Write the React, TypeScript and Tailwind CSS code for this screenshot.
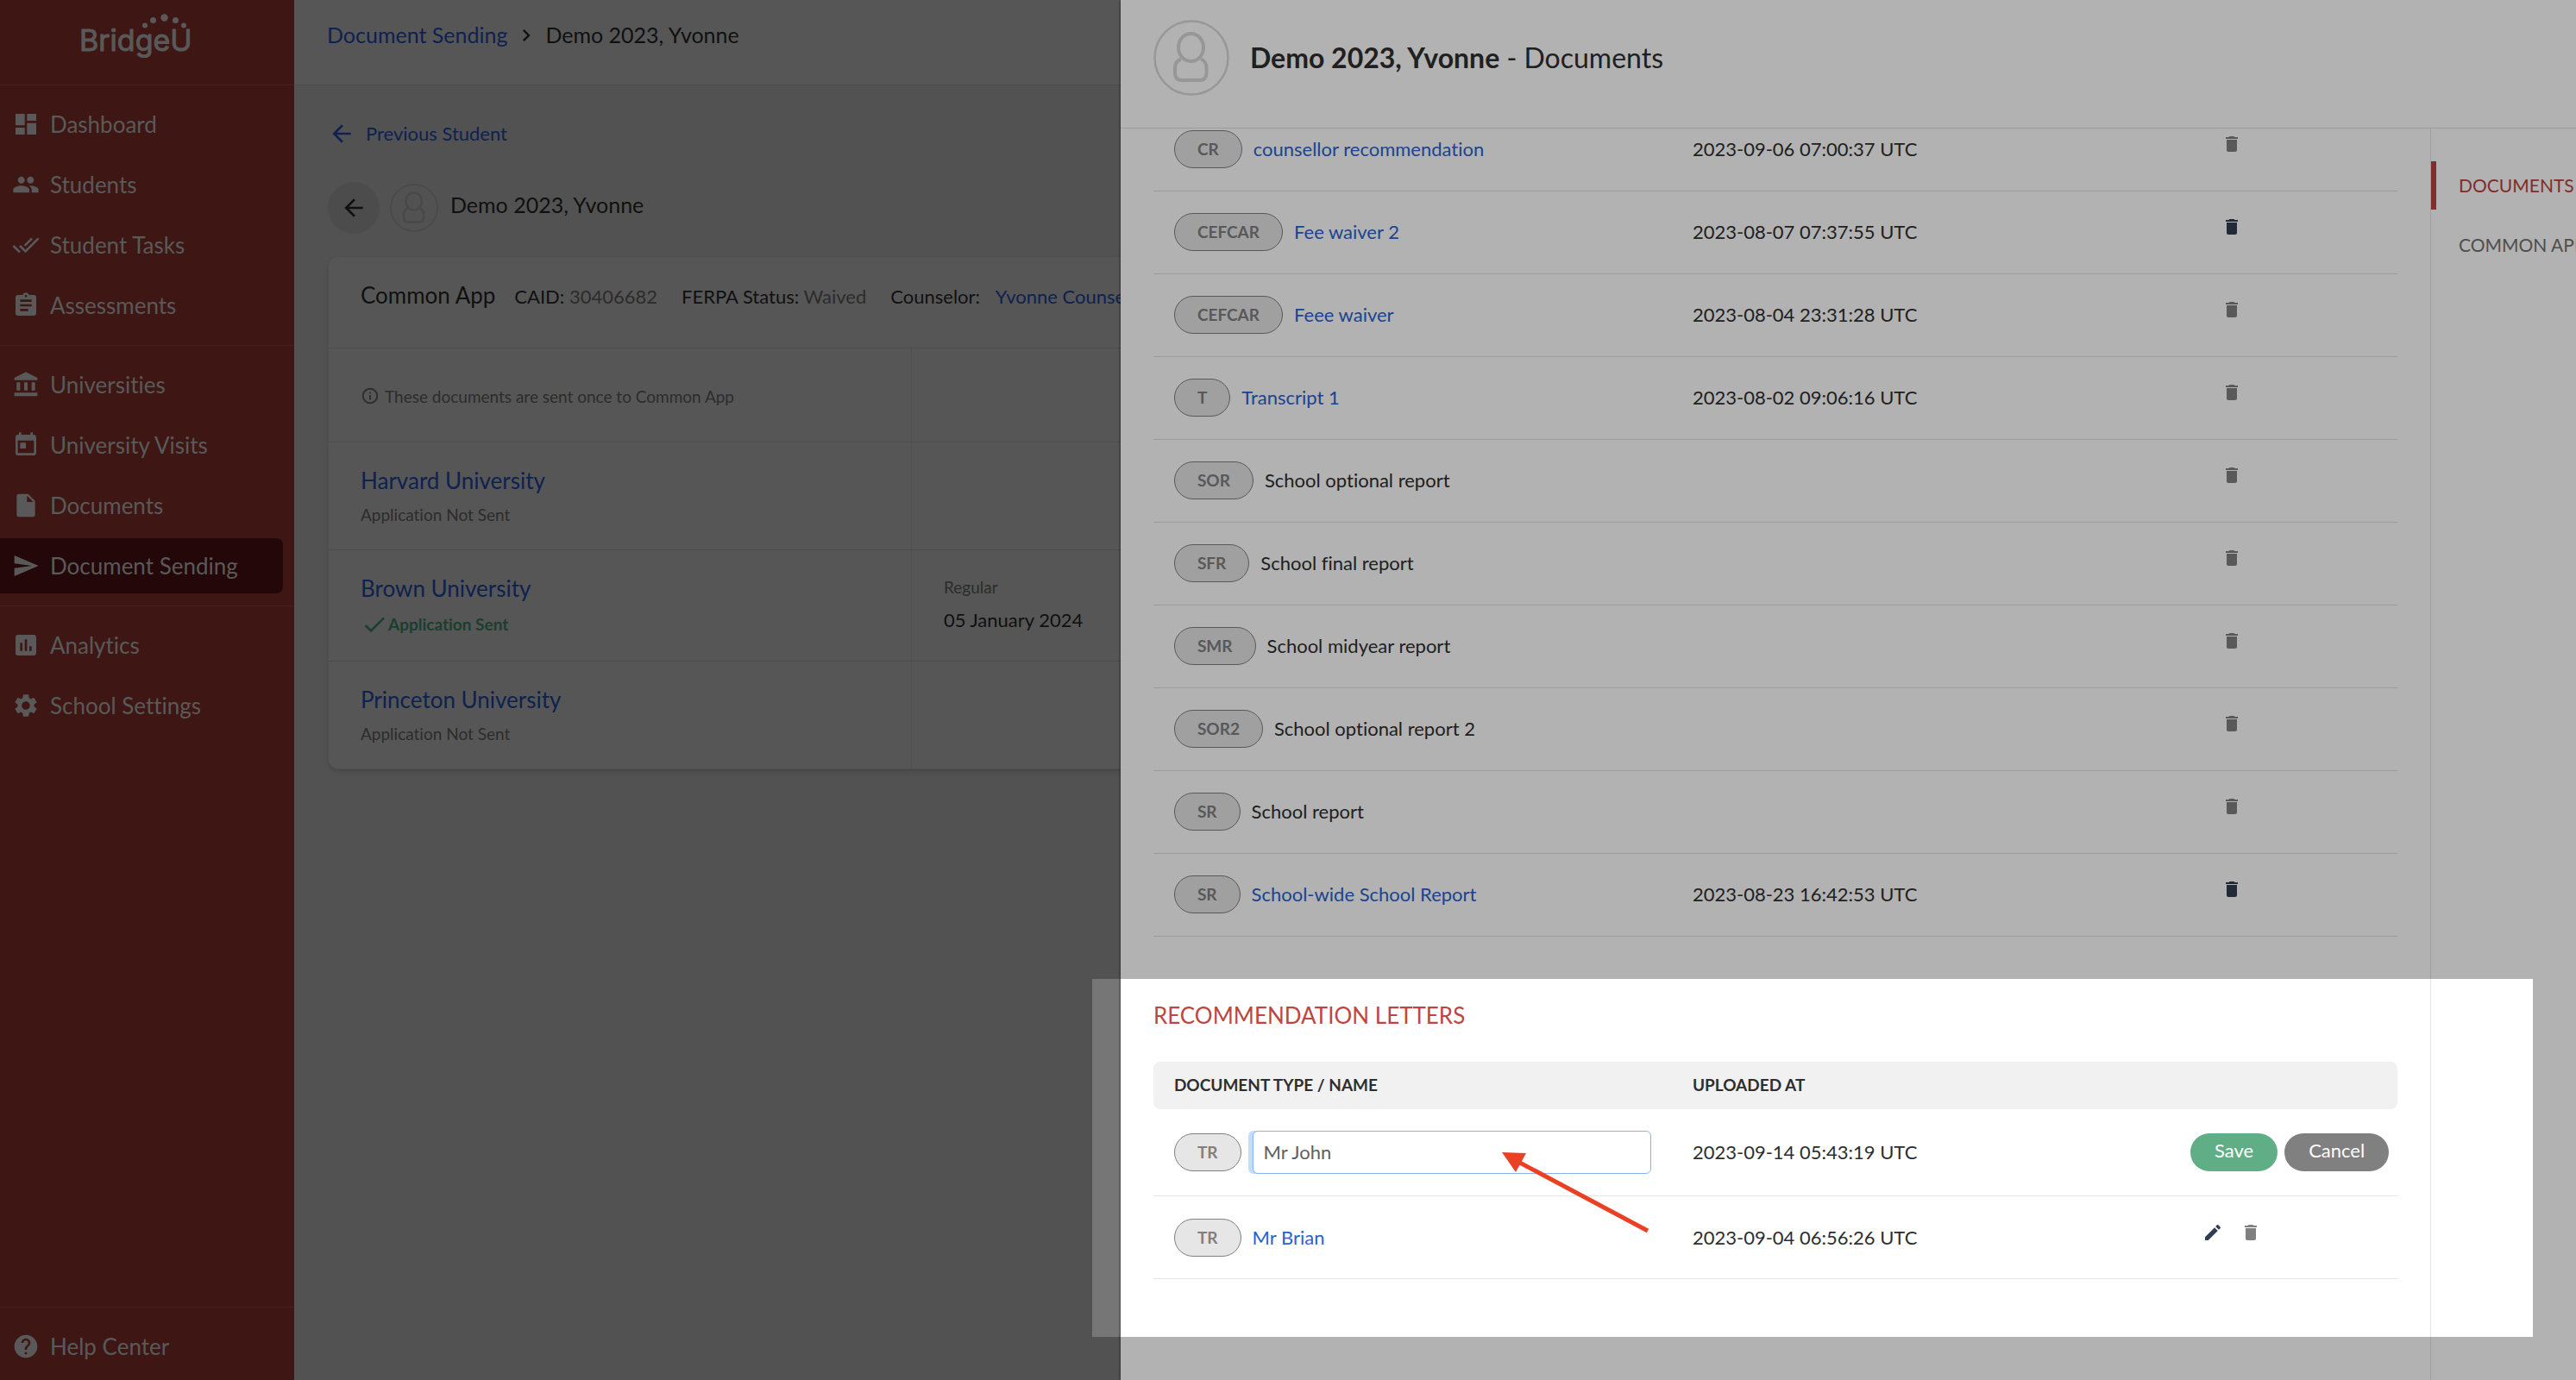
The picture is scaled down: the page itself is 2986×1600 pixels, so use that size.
import React from "react";
import type { IconType } from "react-icons";
import {
  MdAccountBalance,
  MdArrowBack,
  MdAssessment,
  MdAssignment,
  MdCheck,
  MdChevronRight,
  MdDashboard,
  MdDelete,
  MdDoneAll,
  MdEdit,
  MdHelp,
  MdInfoOutline,
  MdInsertDriveFile,
  MdPeople,
  MdSend,
  MdSettings,
  MdToday,
} from "react-icons/md";

type NavEntry = { label: string; icon: IconType; active?: boolean };

const NAV_GROUPS: NavEntry[][] = [
  [
    { label: "Dashboard", icon: MdDashboard },
    { label: "Students", icon: MdPeople },
    { label: "Student Tasks", icon: MdDoneAll },
    { label: "Assessments", icon: MdAssignment },
  ],
  [
    { label: "Universities", icon: MdAccountBalance },
    { label: "University Visits", icon: MdToday },
    { label: "Documents", icon: MdInsertDriveFile },
    { label: "Document Sending", icon: MdSend, active: true },
  ],
  [
    { label: "Analytics", icon: MdAssessment },
    { label: "School Settings", icon: MdSettings },
  ],
];

type Doc = { code: string; name: string; uploaded?: string; deletable?: boolean };

const DOCUMENTS: Doc[] = [
  { code: "CR", name: "counsellor recommendation", uploaded: "2023-09-06 07:00:37 UTC" },
  { code: "CEFCAR", name: "Fee waiver 2", uploaded: "2023-08-07 07:37:55 UTC", deletable: true },
  { code: "CEFCAR", name: "Feee waiver", uploaded: "2023-08-04 23:31:28 UTC" },
  { code: "T", name: "Transcript 1", uploaded: "2023-08-02 09:06:16 UTC" },
  { code: "SOR", name: "School optional report" },
  { code: "SFR", name: "School final report" },
  { code: "SMR", name: "School midyear report" },
  { code: "SOR2", name: "School optional report 2" },
  { code: "SR", name: "School report" },
  { code: "SR", name: "School-wide School Report", uploaded: "2023-08-23 16:42:53 UTC", deletable: true },
];

function Logo() {
  return (
    <svg viewBox="0 0 140 64" className="h-16 w-[140px]" fill="currentColor" role="img" aria-label="BridgeU">
      <circle cx="79" cy="21.500" r="3" />
      <circle cx="88.500" cy="15.500" r="3.500" />
      <circle cx="101.500" cy="12.500" r="4.200" />
      <circle cx="114.500" cy="15.500" r="3.500" />
      <circle cx="124" cy="21.500" r="3" />
      <text
        x="3"
        y="51"
        stroke="currentColor"
        strokeWidth="1"
        strokeLinejoin="round"
        className="font-[Inter] text-[34px]"
      >
        BridgeU
      </text>
    </svg>
  );
}

function Avatar({ className }: { className: string }) {
  return (
    <svg viewBox="0 0 88 88" className={className} fill="none" stroke="currentColor" aria-hidden="true">
      <circle cx="44" cy="44" r="42.500" strokeWidth="2.500" />
      <ellipse cx="43.500" cy="32" rx="14.500" ry="16" strokeWidth="4" />
      <path
        d="M32 45.500Q25 48 25 56V62Q25 70 33.500 70H53Q61.500 70 61.500 62V56Q61.500 48 55 45.500"
        strokeWidth="4"
      />
    </svg>
  );
}

function NavItem({ label, icon: Icon, active }: NavEntry) {
  return (
    <a
      href="#"
      className={
        active
          ? "mr-[13px] flex h-16 items-center gap-3 rounded-r-lg bg-[#330b0d] pl-[14px]"
          : "mr-[13px] flex h-16 items-center gap-3 pl-[14px]"
      }
    >
      <Icon className="size-8" />
      <span>{label}</span>
    </a>
  );
}

function Sidebar() {
  return (
    <aside className="flex w-[341px] shrink-0 flex-col bg-[#5a201d] text-[26px] leading-8 text-[#808080]">
      <div className="flex h-[99px] justify-start border-b border-[#682b29] pl-[89px] pt-2">
        <Logo />
      </div>
      <nav>
        {NAV_GROUPS.map((group, i) => (
          <div
            key={i}
            className="flex flex-col gap-[6px] border-[#682b29] pb-[14px] pt-[13px] [&:not(:last-child)]:border-b"
          >
            {group.map((item) => (
              <NavItem key={item.label} {...item} />
            ))}
          </div>
        ))}
      </nav>
      <div className="mt-auto border-t border-[#682b29] pb-[7px] pt-[13px]">
        <NavItem label="Help Center" icon={MdHelp} />
      </div>
    </aside>
  );
}

function UniversityRow({
  name,
  sent,
  round,
  deadline,
}: {
  name: string;
  sent?: boolean;
  round?: string;
  deadline?: string;
}) {
  return (
    <div className="flex border-t border-[#6e6e6e]">
      <div className="w-[676px] border-r border-[#727272] px-[37px] py-7">
        <a href="#" className="block text-[26px] leading-8 text-[#153072]">
          {name}
        </a>
        {sent ? (
          <p className="mt-3 flex h-7 items-center text-[19px] font-bold leading-6 text-[#285a42]">
            <MdCheck className="size-8 shrink-0" />
            Application Sent
          </p>
        ) : (
          <p className="mt-3 text-[19px] leading-6 text-[#404040]">Application Not Sent</p>
        )}
      </div>
      {deadline && (
        <div className="flex flex-col justify-center gap-[10px] px-[37px]">
          <span className="text-[19px] leading-6 text-[#404040]">{round}</span>
          <span className="text-[22px] leading-8">{deadline}</span>
        </div>
      )}
    </div>
  );
}

function StudentPage() {
  return (
    <main className="min-w-0 flex-1 bg-[#767676] text-[22px] leading-8 text-[#181818]">
      <header className="flex h-[99px] items-start border-b border-[#6e6e6e] bg-[#7c7c7c] pl-[38px] pt-6 text-[25px]">
        <a href="#" className="text-[#153072]">
          Document Sending
        </a>
        <MdChevronRight className="mx-2 mt-[3px] size-7" />
        <span>Demo 2023, Yvonne</span>
      </header>
      <div className="px-[39px] pt-10">
        <a href="#" className="flex items-center gap-3 text-[#153072]">
          <MdArrowBack className="size-8" />
          Previous Student
        </a>
        <div className="mt-10 flex items-center">
          <button
            type="button"
            aria-label="Back"
            className="flex size-[60px] items-center justify-center rounded-full bg-[#6e6e6e]"
          >
            <MdArrowBack className="size-8" />
          </button>
          <Avatar className="ml-3 size-14 text-[#696969]" />
          <h1 className="ml-[14px] pb-2 text-[25px]">Demo 2023, Yvonne</h1>
        </div>
        <section className="mt-[26px] rounded-xl border border-[#727272] bg-[#7c7c7c] shadow-md">
          <div className="flex h-[105px] items-baseline gap-[22px] whitespace-nowrap px-[37px] pt-7">
            <h2 className="text-[26px]">Common App</h2>
            <div className="flex gap-7">
              <p>
                CAID: <span className="text-[#404040]">30406682</span>
              </p>
              <p>
                FERPA Status: <span className="text-[#404040]">Waived</span>
              </p>
              <p>
                Counselor:{" "}
                <a href="#" className="ml-3 text-[#153072]">
                  Yvonne Counselor
                </a>
              </p>
            </div>
          </div>
          <div className="flex border-t border-[#6e6e6e]">
            <div className="flex h-[108px] w-[676px] items-start gap-[6px] border-r border-[#727272] px-[37px] pt-11 text-[19px] leading-6 text-[#404040]">
              <MdInfoOutline className="size-[22px]" />
              These documents are sent once to Common App
            </div>
          </div>
          <UniversityRow name="Harvard University" />
          <UniversityRow name="Brown University" sent round="Regular" deadline="05 January 2024" />
          <UniversityRow name="Princeton University" />
        </section>
      </div>
    </main>
  );
}

function Pill({ children }: { children: React.ReactNode }) {
  return (
    <span className="flex h-11 shrink-0 items-center rounded-full border border-[#808080] bg-[#e6e6e6] px-[26px] text-[19px] font-bold leading-6 text-[#808080]">
      {children}
    </span>
  );
}

function Columns() {
  return (
    <colgroup>
      <col className="w-[601px]" />
      <col />
      <col className="w-[264px]" />
    </colgroup>
  );
}

function Actions({ children }: { children: React.ReactNode }) {
  return <div className="flex w-24 items-center justify-center gap-5 pb-3">{children}</div>;
}

function DocumentsDrawer() {
  return (
    <aside className="absolute inset-y-0 right-0 flex w-[56.5%] flex-col bg-white text-[22px] leading-8 text-[#2e2e2e] shadow-[-1px_0_2px_rgba(0,0,0,0.4)]">
      <header className="flex h-[149px] shrink-0 items-start gap-6 border-b border-[#e0e0e0] pl-[38px] pt-[23px]">
        <Avatar className="size-[88px] text-[#d9d9d9]" />
        <h2 className="pt-6 text-[32px] leading-10">
          <strong>Demo 2023, Yvonne</strong> - Documents
        </h2>
      </header>
      <div className="flex min-h-0 flex-1">
        <div className="min-w-0 flex-1 overflow-hidden px-[38px]">
          <table className="-mt-6 w-full table-fixed border-collapse">
            <Columns />
            <tbody>
              {DOCUMENTS.map((doc, i) => (
                <tr key={i} className="h-24 border-b border-[#e0e0e0]">
                  <td className="px-6">
                    <div className="flex items-center gap-[13px]">
                      <Pill>{doc.code}</Pill>
                      {doc.uploaded ? (
                        <a href="#" className="text-[#2a62cf]">
                          {doc.name}
                        </a>
                      ) : (
                        <span>{doc.name}</span>
                      )}
                    </div>
                  </td>
                  <td className="px-6">{doc.uploaded}</td>
                  <td className="pl-6">
                    <Actions>
                      <button
                        type="button"
                        aria-label={`Delete ${doc.name}`}
                        className={doc.deletable ? "text-[#323d53]" : "text-[#808080]"}
                      >
                        <MdDelete className="size-6" />
                      </button>
                    </Actions>
                  </td>
                </tr>
              ))}
            </tbody>
          </table>

          <h3 className="mt-[75px] text-[26px] text-[#bf4640]">RECOMMENDATION LETTERS</h3>
          <table className="mt-[38px] w-full table-fixed border-collapse">
            <Columns />
            <thead>
              <tr className="h-[55px] text-left text-[19px] leading-6">
                <th className="rounded-l-lg bg-[#f1f1f1] px-6 font-bold">DOCUMENT TYPE / NAME</th>
                <th className="bg-[#f1f1f1] px-6 font-bold">UPLOADED AT</th>
                <th className="rounded-r-lg bg-[#f1f1f1]">
                  <span className="sr-only">Actions</span>
                </th>
              </tr>
            </thead>
            <tbody>
              <tr className="h-[101px] border-b border-[#e4e4e4]">
                <td className="px-6">
                  <div className="flex items-center gap-[13px]">
                    <Pill>TR</Pill>
                    <input
                      type="text"
                      aria-label="Document name"
                      defaultValue="Mr John"
                      className="h-[50px] min-w-0 flex-1 rounded-md border border-[#86b2f3] bg-white px-3 text-[#606060] shadow-[-5px_0_0_0_#c9dafc] outline-none"
                    />
                  </div>
                </td>
                <td className="px-6">2023-09-14 05:43:19 UTC</td>
                <td className="pl-6">
                  <div className="flex gap-2 text-white">
                    <button type="button" className="h-11 rounded-full bg-[#5fae86] px-7 pb-1">
                      Save
                    </button>
                    <button type="button" className="h-11 rounded-full bg-[#808080] px-7 pb-1">
                      Cancel
                    </button>
                  </div>
                </td>
              </tr>
              <tr className="h-24 border-b border-[#e4e4e4]">
                <td className="px-6">
                  <div className="flex items-center gap-[13px]">
                    <Pill>TR</Pill>
                    <a href="#" className="text-[#2a62cf]">
                      Mr Brian
                    </a>
                  </div>
                </td>
                <td className="px-6">2023-09-04 06:56:26 UTC</td>
                <td className="pl-6">
                  <Actions>
                    <button type="button" aria-label="Edit Mr Brian" className="text-[#323d53]">
                      <MdEdit className="size-6" />
                    </button>
                    <button type="button" aria-label="Delete Mr Brian" className="text-[#808080]">
                      <MdDelete className="size-6" />
                    </button>
                  </Actions>
                </td>
              </tr>
            </tbody>
          </table>
        </div>
        <nav className="flex w-[169px] shrink-0 flex-col gap-[13px] overflow-hidden whitespace-nowrap border-l border-[#e4e4e4] pt-[38px] text-[21px]">
          <a href="#" className="flex h-14 items-center border-l-6 border-[#b8423e] pl-[26px] text-[#b8423e]">
            DOCUMENTS
          </a>
          <a href="#" className="flex h-14 items-center border-l-6 border-transparent pl-[26px] text-[#717171]">
            COMMON APP
          </a>
        </nav>
      </div>
    </aside>
  );
}

function Spotlight() {
  return (
    <div className="pointer-events-none absolute right-[50px] top-[1135px] h-[415px] w-[1670px] shadow-[0_0_0_3000px_rgba(0,0,0,0.3)]">
      <svg viewBox="0 0 176 98" className="absolute left-[472px] top-[198px] h-[98px] w-44" aria-hidden="true">
        <path d="M20 13L172 94" stroke="#ea4024" strokeWidth="5" fill="none" />
        <path d="M3 3L31 4L19 26Z" fill="#ea4024" />
      </svg>
    </div>
  );
}

export default function App() {
  return (
    <div className="relative flex h-screen overflow-hidden font-[Lato,sans-serif] [font-variant-ligatures:none]">
      <Sidebar />
      <StudentPage />
      <DocumentsDrawer />
      <Spotlight />
    </div>
  );
}
